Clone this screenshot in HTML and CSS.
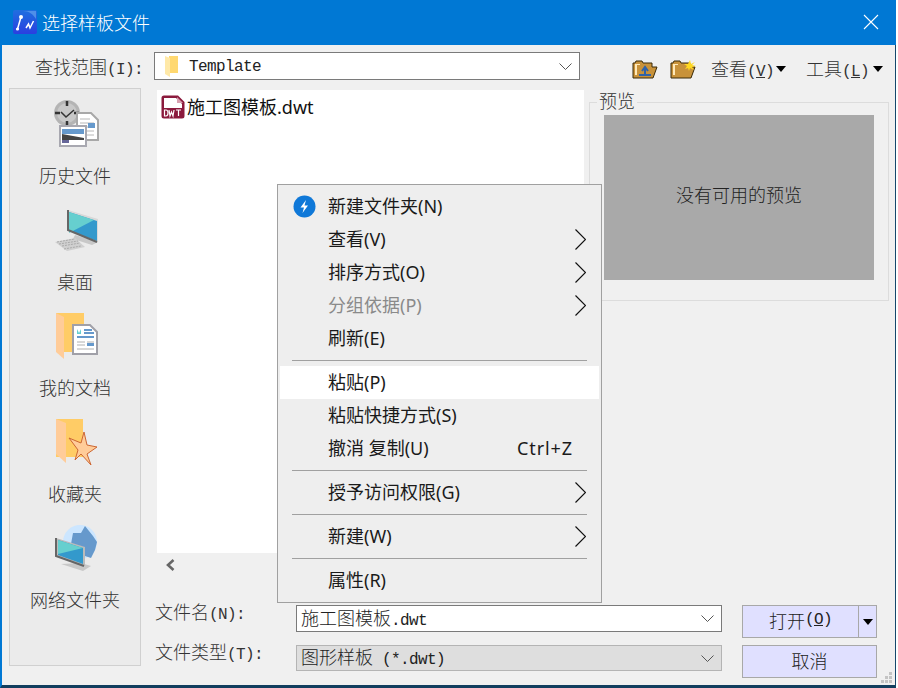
FILE: index.html
```html
<!DOCTYPE html>
<html lang="zh">
<head>
<meta charset="utf-8">
<title>选择样板文件</title>
<link rel="stylesheet" href="styles.css">
</head>
<body>
<div class="window">
  <header class="titlebar">
    <svg class="app-icon" width="24" height="24" viewBox="0 0 24 24">
      <defs><linearGradient id="ag" x1="0" y1="0" x2="0" y2="1"><stop offset="0" stop-color="#1f6fe0"/><stop offset="1" stop-color="#2a3fe0"/></linearGradient></defs>
      <rect width="24" height="24" rx="2" fill="url(#ag)"/>
      <path d="M10 1c6 0 10 3 13 8V1z" fill="#4f8fe8"/>
      <path d="M4.500 19L8 7M13 18l2.500-4 1.500 4 3.500-7" fill="none" stroke="#fff" stroke-width="1.500"/>
      <circle cx="8" cy="7" r="2" fill="#fff"/><circle cx="4.500" cy="19" r="1.600" fill="#fff"/>
    </svg>
    <h1 class="title">选择样板文件</h1>
    <svg class="close" width="16" height="16" viewBox="0 0 16 16"><path d="M1 1l14 14M15 1L1 15" stroke="#fff" stroke-width="1.1" fill="none"/></svg>
  </header>

  <div class="lookin">
    <label class="lookin-label">查找范围<span class="lat">(I):</span></label>
    <div class="combo">
      <svg class="combo-folder" width="16" height="23" viewBox="0 0 16 23">
        <path d="M5 1h9v17H5z" fill="#ffd870"/><path d="M1 1l5 2v19l-5-3z" fill="#ffe9a8"/>
      </svg>
      <span class="lat combo-text">Template</span>
      <svg class="chev" width="13" height="7" viewBox="0 0 13 7"><path d="M.5.5l6 6 6-6" fill="none" stroke="#555"/></svg>
    </div>
    <div class="tools">
      <svg class="tool-folder" width="26" height="19" viewBox="0 0 26 19">
        <path d="M1 18V3h2l1-2h6l1 2h9v4h5l-4 11z" fill="#c8923a" stroke="#3a2a08"/>
        <path d="M3 15V4h5v1h-3v10z" fill="#ffe9b8"/>
        <path d="M7 15h12M13 14V8M10 11l3-4 3 4" fill="none" stroke="#2f62a8" stroke-width="2"/>
      </svg>
      <svg class="tool-folder2" width="27" height="19" viewBox="0 0 27 19">
        <path d="M1 18V3h2l1-2h6l1 2h9v4h5l-4 11z" fill="#c8923a" stroke="#3a2a08"/>
        <path d="M3 15V4h5v1h-3v10z" fill="#ffe9b8"/>
        <path d="M20 0l1 4 4-2-3 3 4 1-4 1 2 3-4-2-1 3-1-3-3 1 2-3-3-2 4 0z" fill="#ffd820"/>
      </svg>
      <span class="tool-text t-view">查看<span class="lat">(<u>V</u>)</span></span>
      <span class="tri t-tri1"></span>
      <span class="tool-text t-tools">工具<span class="lat">(<u>L</u>)</span></span>
      <span class="tri t-tri2"></span>
    </div>
  </div>

  <div class="main">
    <aside class="sidebar">
      <div class="place">
        <svg class="place-icon" width="48" height="48" viewBox="0 0 48 48">
          <circle cx="16" cy="14" r="13" fill="#b4b4b4"/><circle cx="16" cy="14" r="10" fill="#c8c8c8"/>
          <path d="M16 2v5M16 22v5M4 14h5M23 14h5" stroke="#333" stroke-width="2.5"/>
          <path d="M10 13l5 5 8-7" fill="none" stroke="#333" stroke-width="1.5"/>
          <path d="M26 14h14l7 7v20H26z" fill="#fff" stroke="#a8a8a8" stroke-width="2"/>
          <path d="M29 20h10M29 24h14M29 28h14M29 32h14M29 36h14" stroke="#b8b8b8"/>
          <path d="M37 24h7v5h-7z" fill="#6699cc"/>
          <rect x="9" y="27" width="26" height="20" fill="#fff" stroke="#a8a8b0" stroke-width="2"/>
          <rect x="11" y="30" width="22" height="5" fill="#6699cc"/>
          <path d="M11 35l22 4v2H18l-7 3z" fill="#444"/><path d="M11 41h7v3h-7z" fill="#666699"/>
        </svg>
        <span class="place-label">历史文件</span>
      </div>
      <div class="place">
        <svg class="place-icon" width="48" height="48" viewBox="0 0 48 48">
          <path d="M24 30l23 7-6 3-19-6z" fill="#c8c8c8"/>
          <path d="M4 37l20-4 10 9-18 4z" fill="#d0d0d0"/>
          <path d="M6 37l18-3M8 39l19-3M11 41l18-3M13 44l17-3" stroke="#aaa" stroke-dasharray="2 1"/>
          <path d="M17 5l30 9v23L17 25z" fill="#d8d8d8"/>
          <path d="M18 7l28 9v20L18 26z" fill="#3399cc"/>
          <path d="M18 7l25 8-25 13z" fill="#66cfcf"/>
          <path d="M17 5v20l29 12" fill="none" stroke="#666" stroke-width="2"/>
        </svg>
        <span class="place-label">桌面</span>
      </div>
      <div class="place">
        <svg class="place-icon" width="48" height="48" viewBox="0 0 48 48">
          <path d="M5 2h28v39H5z" fill="#ffcc66"/><path d="M5 2l8 4v42l-8-7z" fill="#ffcc99"/>
          <path d="M22 14h17l7 7v22H22z" fill="#fff" stroke="#a0a0a8" stroke-width="2"/>
          <path d="M33 19h8M33 22h10" stroke="#6699cc" stroke-width="2"/><path d="M26 26h17" stroke="#6699cc" stroke-width="2"/>
          <path d="M26 18l2 4 2-4v5h-4z" fill="#66cfcf"/>
          <path d="M26 31h8M26 34h8M26 38h17M36 31h7" stroke="#b0b0b0"/><rect x="36" y="32" width="7" height="3" fill="#6699cc"/>
        </svg>
        <span class="place-label">我的文档</span>
      </div>
      <div class="place">
        <svg class="place-icon" width="48" height="48" viewBox="0 0 48 48">
          <path d="M5 2h27v38H5z" fill="#ffcc66"/><path d="M5 2l10 4v40l-10-9z" fill="#ffcc99"/>
          <path d="M33 15l3 13 10 2-10 7 4 11-10-11-6 6 3-10-9-12 12 5z" fill="#ffcc99" stroke="#cc6633"/>
        </svg>
        <span class="place-label">收藏夹</span>
      </div>
      <div class="place">
        <svg class="place-icon" width="48" height="48" viewBox="0 0 48 48">
          <circle cx="29" cy="19" r="17" fill="#cce6ff"/>
          <path d="M22 10l8 0 4-7 8 10 4 6-2 8-4 8-12-4-8-10z" fill="#6699cc"/>
          <path d="M10 41l22 7 8-5-10-3z" fill="#c8c8c8"/>
          <path d="M5 15l29 9v19L5 33z" fill="#bbb"/>
          <path d="M7 17l25 8v16L7 32z" fill="#3399cc"/>
          <path d="M7 17l25 8L7 31z" fill="#66cfcf"/>
          <path d="M5 15v18l28 10" fill="none" stroke="#666" stroke-width="2"/>
        </svg>
        <span class="place-label">网络文件夹</span>
      </div>
    </aside>

    <div class="center">
      <div class="browser">
        <div class="left-col">
          <div class="files">
            <div class="file">
              <svg class="file-icon" width="24" height="24" viewBox="0 0 24 24">
                <path d="M.5 3A2.5 2.5 0 0 1 3 .5h14L23.500 7v14a2.500 2.500 0 0 1-2.500 2.500H3A2.500 2.500 0 0 1 .5 21z" fill="#8b1a3d"/>
                <path d="M3 3h12l6 6v4H3z" fill="#fff"/><path d="M16 2l6 6h-6z" fill="#d8a0b0"/>
                <rect x="2" y="14" width="20" height="8" fill="#8b1a3d"/>
                <path d="M3.500 15v6h1.500q2 0 2-3t-2-3zM8 15l1 6 1.500-4 1.500 4 1-6M15 15h5M17.500 15v6" fill="none" stroke="#fff" stroke-width="1.200"/>
              </svg>
              <span class="file-name">施工图模板.dwt</span>
            </div>
          </div>
          <div class="hscroll">
            <svg width="11" height="12" viewBox="0 0 11 12"><path d="M8.500 1L3 6l5.500 5" fill="none" stroke="#666" stroke-width="2.600"/></svg>
          </div>
        </div>
        <fieldset class="preview">
          <legend class="preview-legend">预览</legend>
          <div class="preview-box">没有可用的预览</div>
        </fieldset>
      </div>

      <div class="form">
        <label class="form-label">文件名<span class="lat">(N):</span></label>
        <div class="field field-name">
          <span class="field-text">施工图模板<span class="lat">.dwt</span></span>
          <svg class="chev" width="13" height="7" viewBox="0 0 13 7"><path d="M.5.5l6 6 6-6" fill="none" stroke="#555"/></svg>
        </div>
        <div class="btn btn-open">
          <span class="btn-main">打开<span class="lat">(<u>O</u>)</span></span>
          <span class="btn-split"><span class="tri"></span></span>
        </div>
        <label class="form-label">文件类型<span class="lat">(T):</span></label>
        <div class="field field-type">
          <span class="field-text">图形样板<span class="lat"> (*.dwt)</span></span>
          <svg class="chev" width="13" height="7" viewBox="0 0 13 7"><path d="M.5.5l6 6 6-6" fill="none" stroke="#555"/></svg>
        </div>
        <div class="btn btn-cancel">取消</div>
      </div>
    </div>
  </div>

  <svg class="grip" width="11" height="11" viewBox="0 0 11 11" fill="#c4c4c4">
    <rect x="8" y="0" width="3" height="3"/><rect x="4" y="4" width="3" height="3"/><rect x="8" y="4" width="3" height="3"/>
    <rect x="0" y="8" width="3" height="3"/><rect x="4" y="8" width="3" height="3"/><rect x="8" y="8" width="3" height="3"/>
  </svg>

  <nav class="menu">
    <div class="item"><span class="slot"><svg width="23" height="23" viewBox="0 0 23 23"><circle cx="11.500" cy="11.500" r="11" fill="#0f78d8"/><path d="M13 5l-5.500 7.500h3.500L9.500 18l5.500-7.500h-3.500z" fill="#fff"/></svg></span><span>新建文件夹(N)</span></div>
    <div class="item"><span class="slot"></span><span>查看(V)</span><svg class="arrow" width="11" height="21" viewBox="0 0 11 21"><path d="M.5.5l10 10-10 10" fill="none" stroke="#111" stroke-width="1.200"/></svg></div>
    <div class="item"><span class="slot"></span><span>排序方式(O)</span><svg class="arrow" width="11" height="21" viewBox="0 0 11 21"><path d="M.5.5l10 10-10 10" fill="none" stroke="#111" stroke-width="1.200"/></svg></div>
    <div class="item item-off"><span class="slot"></span><span>分组依据(P)</span><svg class="arrow" width="11" height="21" viewBox="0 0 11 21"><path d="M.5.5l10 10-10 10" fill="none" stroke="#111" stroke-width="1.200"/></svg></div>
    <div class="item"><span class="slot"></span><span>刷新(E)</span></div>
    <div class="sep"></div>
    <div class="item item-hover"><span class="slot"></span><span>粘贴(P)</span></div>
    <div class="item"><span class="slot"></span><span>粘贴快捷方式(S)</span></div>
    <div class="item"><span class="slot"></span><span>撤消 复制(U)</span><span class="shortcut">Ctrl+Z</span></div>
    <div class="sep"></div>
    <div class="item"><span class="slot"></span><span>授予访问权限(G)</span><svg class="arrow" width="11" height="21" viewBox="0 0 11 21"><path d="M.5.5l10 10-10 10" fill="none" stroke="#111" stroke-width="1.200"/></svg></div>
    <div class="sep"></div>
    <div class="item"><span class="slot"></span><span>新建(W)</span><svg class="arrow" width="11" height="21" viewBox="0 0 11 21"><path d="M.5.5l10 10-10 10" fill="none" stroke="#111" stroke-width="1.200"/></svg></div>
    <div class="sep"></div>
    <div class="item"><span class="slot"></span><span>属性(R)</span></div>
  </nav>
</div>
</body>
</html>
```
FILE: styles.css
```css
* { box-sizing: border-box; }
html, body { margin: 0; padding: 0; background: #fff; }
body {
  width: 898px; height: 688px; overflow: hidden;
  font-family: "Noto Sans CJK SC", "Noto Sans", sans-serif;
  font-size: 18px; font-weight: 300; color: #333;
}
svg { display: block; flex: none; }
.lat { font-family: "Liberation Mono", "Noto Sans CJK SC", monospace; font-size: 16px; letter-spacing: -0.6px; font-weight: 400; }

.window {
  position: relative; width: 896px; height: 688px;
  display: flex; flex-direction: column;
  background: #f0f0f0;
  border-left: 2px solid #0078d4; border-right: 1px solid #15486c; border-bottom: 3px solid #123e5e;
}
.titlebar { flex: none; height: 45px; background: #0078d4; display: flex; align-items: center; padding: 0 17px 1px 11px; margin-right: -1px; }
.title { margin: 0 0 0 5px; font-size: 18px; font-weight: 300; color: #fff; line-height: 24px; flex: 1; }

.lookin { flex: none; height: 43px; padding-top: 7px; display: flex; align-items: flex-start; }
.lookin-label { width: 119px; margin-left: 33px; line-height: 28px; height: 28px; white-space: nowrap; }
.combo { width: 426px; height: 28px; background: #fff; border: 1px solid #7a7a7a; display: flex; align-items: center; padding: 0 7px 0 9px; }
.combo-folder { margin-right: 9px; }
.combo-text { flex: 1; color: #222; padding-top: 2px; }
.tools { display: flex; align-items: center; height: 20px; margin-top: 7px; margin-left: 52px; }
.tool-folder2 { margin-left: 12px; }
.tool-text { line-height: 18px; height: 20px; white-space: nowrap; width: 59px; }
.t-view { margin-left: 14px; }
.t-tools { margin-left: 20px; }
.t-tri1 { margin-left: 6px; }
.t-tri2 { margin-left: 8px; }
.tri { display: block; width: 0; height: 0; border-left: 5px solid transparent; border-right: 5px solid transparent; border-top: 6px solid #000; }

.main { flex: 1; display: flex; padding-left: 7px; min-height: 0; }
.sidebar { flex: none; width: 132px; height: 578px; background: #ebebeb; border: 1px solid #d0d0d0; display: flex; flex-direction: column; }
.place { flex: none; height: 106px; padding-top: 10px; display: flex; flex-direction: column; align-items: center; }
.place-icon { margin-bottom: 16px; }
.place-label { line-height: 24px; white-space: nowrap; }

.center { width: 741px; margin-left: 15px; }
.browser { display: flex; height: 489px; }
.left-col { width: 428px; flex: none; padding: 2px 0 0 1px; }
.files { height: 463px; background: #fff; padding: 5px 4px; }
.file { display: flex; align-items: center; height: 24px; }
.file-name { margin-left: 2px; font-family: "Noto Sans", "Noto Sans CJK SC", sans-serif; font-weight: 400; color: #111; line-height: 24px; }
.hscroll { height: 24px; display: flex; align-items: center; padding-left: 8px; }

.preview { margin: 5px 0 0 5px; padding: 4px 14px 20px; width: 300px; height: 208px; border: 1px solid #dcdcdc; min-width: 0; }
.preview-legend { padding: 0 2px; margin-left: -7px; line-height: 14px; height: 18px; }
.preview-box { width: 270px; height: 165px; background: #a9a9a9; display: flex; align-items: center; justify-content: center; color: #222; padding-bottom: 8px; }

.form { margin-top: 28px; display: grid; grid-template-columns: 120px 426px 135px; column-gap: 20px; row-gap: 7px; grid-template-rows: 33px 33px; }
.form-label { line-height: 18px; margin: -3px 0 0 -1px; white-space: nowrap; }
.field { display: flex; align-items: center; padding: 0 7px 0 4px; }
.field-text { flex: 1; white-space: pre; color: #222; line-height: 20px; }
.field-name { height: 27px; background: #fff; border: 1px solid #7a7a7a; }
.field-type { height: 26px; background: #dedede; border: 1px solid #b4b4b4; }
.btn { background: #e0e0ff; border: 1px solid #a8a8a8; color: #222; display: flex; align-items: center; justify-content: center; padding-bottom: 4px; }
.btn-open { padding-bottom: 0; }
.btn-main { flex: 1; height: 100%; display: flex; align-items: center; justify-content: center; padding-bottom: 3px; }
.btn-split { width: 18px; height: 100%; border-left: 1px solid #a8a8a8; display: flex; align-items: center; justify-content: center; }

.grip { position: absolute; right: 3px; bottom: 2px; }

.menu {
  position: absolute; left: 275px; top: 184px; width: 325px; height: 419px;
  padding: 5px 2px; background: #eeeeee; border: 1px solid #a0a0a0;
  font-family: "Noto Sans", "Noto Sans CJK SC", sans-serif; font-weight: 400; color: #1a1a1a;
}
.item { height: 33px; display: flex; align-items: center; padding: 0 13px; line-height: 33px; white-space: pre; }
.slot { width: 35px; flex: none; }
.arrow { margin-left: auto; }
.shortcut { margin-left: auto; padding-right: 13px; letter-spacing: 0.9px; }
.item-off { color: #8a8a8a; }
.item-hover { background: #fff; }
.sep { height: 1px; margin: 5px 12px; background: #a0a0a0; }
```
